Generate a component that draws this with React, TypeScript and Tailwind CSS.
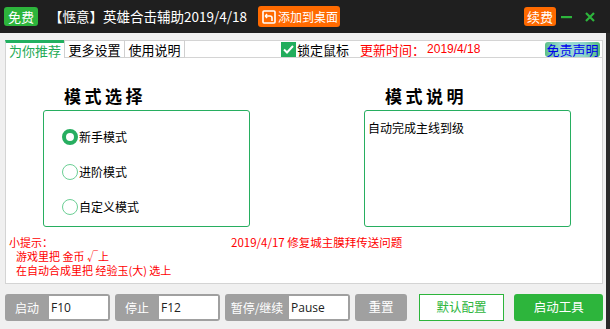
import React from "react";

const cjk = { fontFamily: '"Noto Sans CJK SC", "Noto Sans", sans-serif' };

function Radio({ checked, label }: { checked?: boolean; label: string }) {
  return (
    <div className="flex items-center h-[16px]">
      {checked ? (
        <span className="w-[16px] h-[16px] rounded-full border-[4px] border-[#27ae60] bg-white" />
      ) : (
        <span className="w-[16px] h-[16px] rounded-full border-[1.5px] border-[#6ccf95] bg-white" />
      )}
      <span className="ml-[1px] text-[12px] text-black leading-none">{label}</span>
    </div>
  );
}

function KeyBox({ label, value, labelW }: { label: string; value: string; labelW: string }) {
  return (
    <div className="flex h-[27px] rounded-[3px] bg-[#a0a0a0] p-[2px] pl-0">
      <span className={`${labelW} flex items-center justify-center text-[12px] text-white`}>{label}</span>
      <span
        className="w-[59px] bg-white flex items-center pl-[2px] text-[12px] text-[#222]"
        style={{ fontFamily: '"Open Sans", "Liberation Sans", sans-serif' }}
      >
        {value}
      </span>
    </div>
  );
}

export default function App() {
  return (
    <div className="w-[610px] h-[329px] bg-[#2a2a2a] flex flex-col overflow-hidden" style={cjk}>
      {/* title bar */}
      <div className="h-[33px] bg-[#1f1f1f] flex items-center pl-[4px] pr-[15px] shrink-0 whitespace-nowrap">
        <span className="h-[19px] px-[4px] rounded-[3px] bg-[#2db53c] text-white text-[13px] leading-[19px]">免费</span>
        <span className="ml-[11px] text-white text-[13.5px] leading-none">【惬意】英雄合击辅助2019/4/18</span>
        <span className="ml-[11px] h-[21px] w-[82px] shrink-0 rounded-[3px] bg-[#ff6a00] flex items-center pl-[4px] text-white text-[12px]">
          <svg width="14" height="14" viewBox="0 0 14 14" className="mr-[2px] shrink-0">
            <rect x="1" y="1" width="12" height="12" rx="1" fill="none" stroke="white" strokeWidth="1.6" />
            <path d="M5 4 L3.5 6 L5 8" fill="none" stroke="white" strokeWidth="1.5" />
            <path d="M3.8 6 H8 Q10 6 10 8 V11" fill="none" stroke="white" strokeWidth="1.6" />
          </svg>
          添加到桌面
        </span>
        <span className="ml-auto h-[19px] px-[3px] rounded-[3px] bg-[#ff6a00] text-white text-[13px] leading-[19px]">续费</span>
        <svg width="12" height="4" viewBox="0 0 12 4" className="ml-[5px]">
          <rect x="0" y="1" width="11" height="2.2" fill="#2db53c" />
        </svg>
        <svg width="10" height="10" viewBox="0 0 10 10" className="ml-[12px]">
          <path d="M1 1 L9 9 M9 1 L1 9" stroke="#2db53c" strokeWidth="2.2" />
        </svg>
      </div>

      {/* body */}
      <div className="w-[606px] flex-1 bg-[#f0f0f0] pl-[5px] pr-[3px] pt-[7px] flex flex-col">
        {/* tabs */}
        <div className="flex h-[18px] text-[13px] leading-none">
          <div className="w-[59px] bg-white border-l border-[#d4d4d4] border-t-[3px] border-t-[#22b060] flex items-center justify-center text-[#1eaa55]">
            为你推荐
          </div>
          <div className="w-[61px] bg-white border border-[#d0d0d0] flex items-center justify-center text-black">更多设置</div>
          <div className="w-[60px] bg-white border-y border-r border-[#d0d0d0] flex items-center justify-center text-black">使用说明</div>
          <div className="flex-1 bg-white border-y border-r border-[#d4d4d4] flex items-center pl-[96px]">
            <span className="w-[15px] h-[15px] bg-[#22ad5c] flex items-center justify-center">
              <svg width="11" height="9" viewBox="0 0 11 9">
                <path d="M1 4.5 L4 7.5 L10 1" fill="none" stroke="white" strokeWidth="2" />
              </svg>
            </span>
            <span className="ml-[1px] text-black">锁定鼠标</span>
            <span className="ml-[11px] text-[#ff0000]">更新时间：</span>
            <span className="ml-[2px] text-[#ff0000] text-[12px]" style={{ fontFamily: '"Liberation Sans", sans-serif' }}>
              2019/4/18
            </span>
            <span
              className="ml-auto mr-[2px] h-[15px] w-[55px] rounded-[3px] flex items-center justify-center text-[13px] text-[#0000ee]"
              style={{ background: "linear-gradient(to right, #5cbf88, #9fdcd8 30%, #8ed4cc 70%, #52bb7e)" }}
            >
              免责声明
            </span>
          </div>
        </div>

        {/* content panel */}
        <div className="h-[226px] bg-white border-l border-b border-r border-[#d4d4d4] flex flex-col">
          <div className="flex pl-[37px] pt-[29px]">
            <div className="w-[207px]">
              <div className="pl-[21px] text-[17px] font-bold tracking-[3.5px] leading-[18px] text-black">模式选择</div>
              <div className="mt-[5px] h-[117px] border border-[#27ae60] rounded-[3px] pl-[18px] pt-[18px] flex flex-col gap-[19px]">
                <Radio checked label="新手模式" />
                <Radio label="进阶模式" />
                <Radio label="自定义模式" />
              </div>
            </div>
            <div className="w-[207px] ml-[114px]">
              <div className="pl-[21px] text-[17px] font-bold tracking-[3.5px] leading-[18px] text-black">模式说明</div>
              <div className="mt-[5px] h-[117px] border border-[#27ae60] rounded-[3px] pl-[3px] pt-[11px] text-[12px] text-black leading-none">
                自动完成主线到级
              </div>
            </div>
          </div>
          <div className="mt-[8px] flex text-[11px] leading-[14px] text-[#ff0000]">
            <div className="pl-[3px] w-[225px]">
              <div>小提示：</div>
              <div className="pl-[7px]">游戏里把 金币 √上</div>
              <div className="pl-[7px]">在自动合成里把 经验玉(大) 选上</div>
            </div>
            <div className="text-[11.5px]">2019/4/17 修复城主膜拜传送问题</div>
          </div>
        </div>

        {/* bottom row */}
        <div className="mt-[10px] flex items-center">
          <KeyBox label="启动" value="F10" labelW="w-[44px]" />
          <div className="ml-[5px]">
            <KeyBox label="停止" value="F12" labelW="w-[44px]" />
          </div>
          <div className="ml-[5px]">
            <KeyBox label="暂停/继续" value="Pause" labelW="w-[64px]" />
          </div>
          <span className="ml-[5px] w-[52px] h-[27px] rounded-[3px] bg-[#a0a0a0] text-white text-[12.5px] flex items-center justify-center">
            重置
          </span>
          <span className="ml-[12px] w-[86px] h-[27px] border border-[#2db53c] bg-white text-[#2db53c] text-[12.5px] flex items-center justify-center">
            默认配置
          </span>
          <span className="ml-[10px] w-[89px] h-[27px] rounded-[3px] bg-[#2db53c] text-white text-[12.5px] flex items-center justify-center">
            启动工具
          </span>
        </div>
      </div>
    </div>
  );
}
